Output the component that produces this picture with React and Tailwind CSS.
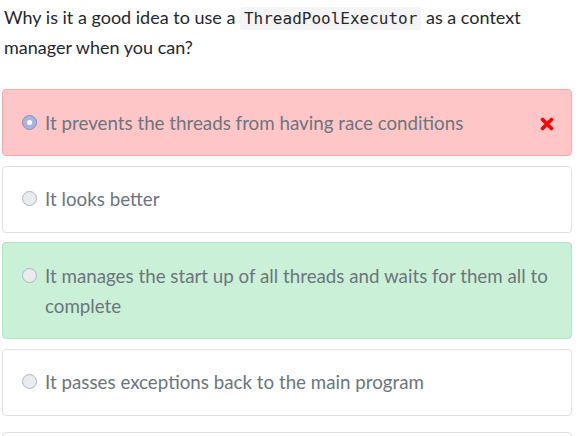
import React from "react";

const options = [
  { text: "It prevents the threads from having race conditions", selected: true, state: "wrong" },
  { text: "It looks better" },
  { text: "It manages the start up of all threads and waits for them all to complete", state: "right" },
  { text: "It passes exceptions back to the main program" },
];

function Radio({ selected }) {
  if (selected) {
    return (
      <span className="mt-[7px] flex h-[15px] w-[15px] shrink-0 items-center justify-center rounded-full border border-[#7f92c8] bg-[#a9b5dc]">
        <span className="h-[5px] w-[5px] rounded-full bg-white" />
      </span>
    );
  }
  return (
    <span className="mt-[7px] h-[15px] w-[15px] shrink-0 rounded-full border border-[#adb5bd] bg-[#e9ecef]" />
  );
}

function Cross() {
  return (
    <svg width="14" height="14" viewBox="0 0 14 14" className="mt-[9px] ml-3 shrink-0">
      <path d="M2.5 2.5 L11.5 11.5 M11.5 2.5 L2.5 11.5" stroke="#ff0000" strokeWidth="3.6" strokeLinecap="round" />
    </svg>
  );
}

function Option({ opt }) {
  let tone = "bg-white border-[#dee2e6]";
  if (opt.state === "wrong") tone = "bg-[#ffc6c8] border-[#f7a8ab]";
  if (opt.state === "right") tone = "bg-[#cbf0d8] border-[#aee5c2]";
  return (
    <div className={`flex items-start rounded-[4px] border pl-[19px] pr-[17px] py-[17.5px] ${tone}`}>
      <Radio selected={opt.selected} />
      <span className="ml-[8px] flex-1 text-[18.75px] leading-[30px] text-[#6c757d]">{opt.text}</span>
      {opt.state === "wrong" && <Cross />}
    </div>
  );
}

export default function App() {
  return (
    <div className="ml-[2px] w-[570px] pt-[2px] font-['Lato','Liberation_Sans',sans-serif]">
      <p className="px-[2px] text-[18px] leading-[30px] text-[#262730]">
        Why is it a good idea to use a{" "}
        <code className="rounded-[3px] bg-[#f4f4f5] px-[4px] py-[2px] font-['DejaVu_Sans_Mono',monospace] text-[16px] leading-none text-[#262730]">
          ThreadPoolExecutor
        </code>{" "}
        as a context manager when you can?
      </p>
      <div className="mt-[27px] flex flex-col gap-[9.5px]">
        {options.map((o, i) => (
          <Option key={i} opt={o} />
        ))}
        <div className="mt-[7px]">
          <Option opt={{ text: "It makes the code run faster" }} />
        </div>
      </div>
    </div>
  );
}
